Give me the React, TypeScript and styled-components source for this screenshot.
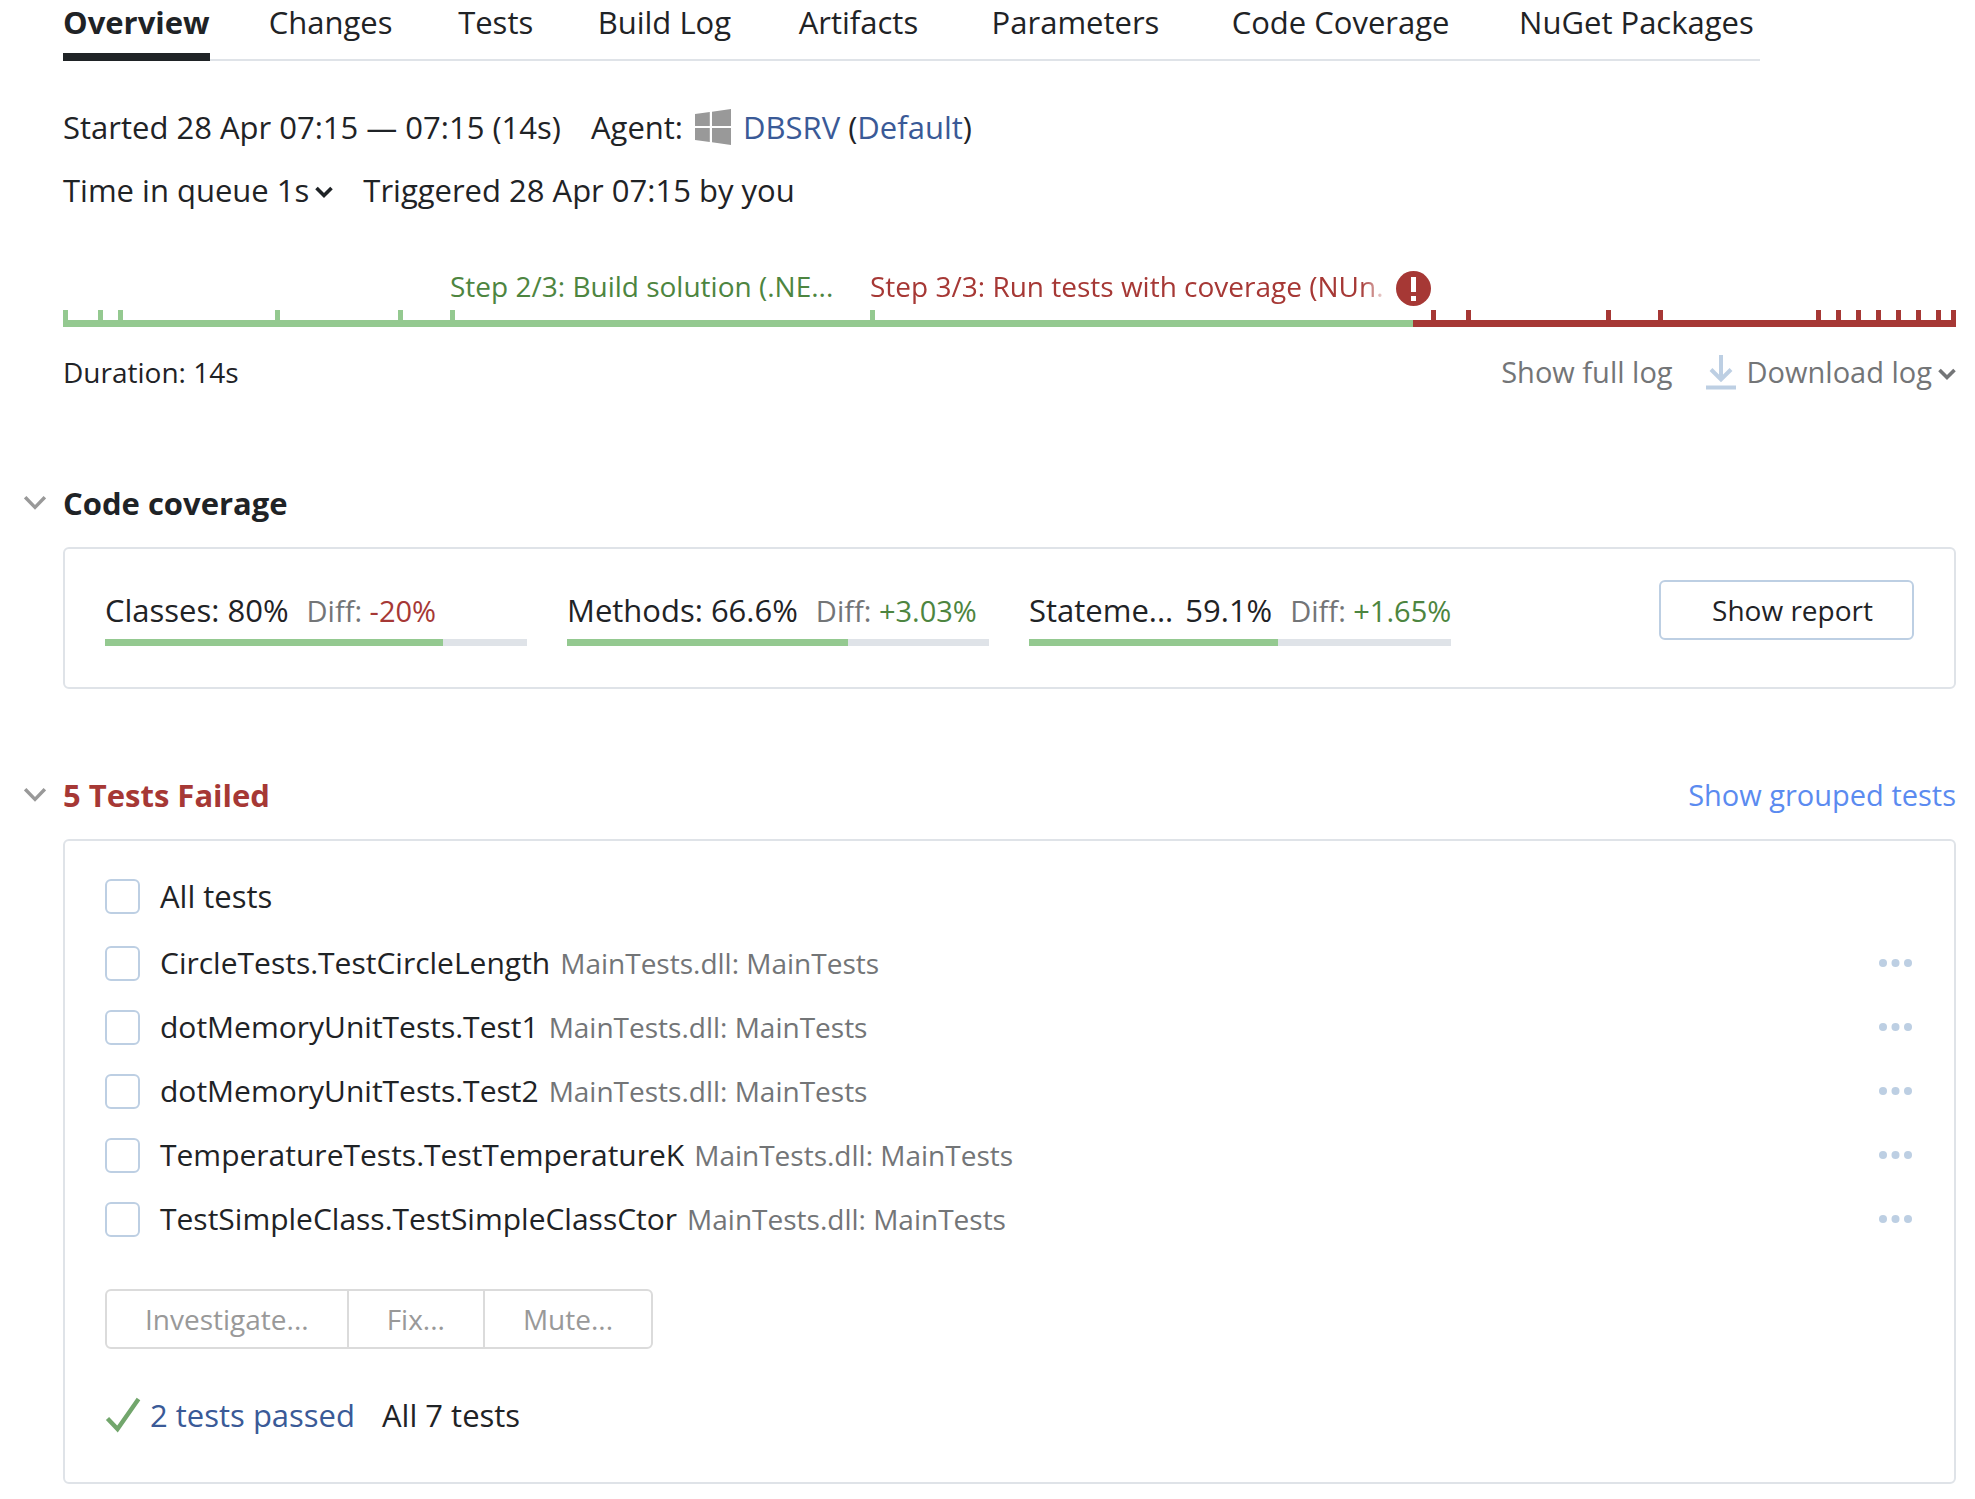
import React from "react";
import styled, { createGlobalStyle } from "styled-components";

const color = {
  text: "#1f2326",
  secondary: "#737577",
  disabled: "#999999",
  line: "#dfe3e8",
  control: "#bdcfe3",
  link: "#3a5a97",
  hover: "#5b8bf0",
  success: "#4d8540",
  failure: "#a63835",
  progress: "#94c990",
};

const GlobalStyle = createGlobalStyle`
  *, *::before, *::after { box-sizing: border-box; }
  body {
    margin: 0;
    background: #fff;
    color: ${color.text};
    font: 31px/44px "Open Sans", "Noto Sans", sans-serif;
  }
  button, input { font: inherit; color: inherit; }
  a { text-decoration: none; }
  ul { margin: 0; padding: 0; list-style: none; }
  svg { display: block; flex: none; }
`;

const Page = styled.main`
  padding: 0 19px 15px 63px;
`;

const Tabs = styled.nav`
  display: inline-flex;
  gap: 59px;
  padding-right: 6px;
  white-space: nowrap;
  box-shadow: inset 0 -2px ${color.line};
`;

const Tab = styled.a<{ $active?: boolean }>`
  height: 61px;
  color: ${color.text};
  font-weight: ${(p) => (p.$active ? 700 : 400)};
  border-bottom: 8px solid ${(p) => (p.$active ? color.text : "transparent")};

  /* Keeps the width of the bold label so tabs do not move when selected. */
  &:not(:last-child)::after {
    content: attr(data-label);
    display: block;
    height: 0;
    overflow: hidden;
    visibility: hidden;
    font-weight: 700;
  }
`;

const Details = styled.section`
  margin-top: 34px;
`;

const DetailRow = styled.div`
  display: flex;
  align-items: center;
  height: 63px;
  gap: 30px;
  white-space: nowrap;
`;

const Agent = styled.span`
  display: flex;
  align-items: center;
  gap: 12px;
`;

const Link = styled.a`
  color: ${color.link};
`;

const PlainButton = styled.button`
  display: flex;
  align-items: center;
  gap: 6px;
  padding: 0;
  border: 0;
  background: none;
  cursor: pointer;
`;

const Timeline = styled.section`
  margin-top: 45px;
`;

const Steps = styled.div`
  display: flex;
  align-items: flex-end;
  padding-bottom: 4px;
`;

const Step = styled.div`
  display: flex;
  align-items: flex-end;
  gap: 7px;
  min-width: 0;
`;

const StepLabel = styled.span<{ $failed?: boolean }>`
  flex: 1;
  overflow: hidden;
  white-space: nowrap;
  font-size: 28px;
  line-height: 40px;
  color: ${(p) => (p.$failed ? color.failure : color.success)};
  mask-image: ${(p) => (p.$failed ? "linear-gradient(to left, transparent, #000 28px)" : "none")};
`;

const Track = styled.div`
  display: flex;
`;

const Segment = styled.div<{ $failed?: boolean }>`
  --tone: ${(p) => (p.$failed ? color.failure : color.progress)};
  height: 17px;
  border-bottom: 7px solid var(--tone);

  &::before {
    content: "";
    display: block;
    width: 5px;
    height: 10px;
    background: var(--tone);
  }
`;

const Gap = styled(Segment)`
  &::before { display: none; }
`;

const TimelineFooter = styled.div`
  display: flex;
  align-items: center;
  justify-content: space-between;
  margin-top: 25px;
  font-size: 28px;
  line-height: 40px;
`;

const LogActions = styled.div`
  display: flex;
  align-items: center;
  gap: 33px;
  font-size: 29px;
  color: ${color.secondary};
`;

const LogLink = styled.a`
  color: inherit;
`;

const DownloadButton = styled(PlainButton)`
  line-height: 40px;
  svg:first-child { margin-right: 5px; }
`;

const Section = styled.section<{ $top: number }>`
  margin-top: ${(p) => p.$top}px;
`;

const SectionHeader = styled.header`
  display: flex;
  align-items: center;
  justify-content: space-between;
  margin: 0 0 22px -39px;
`;

const SectionTitle = styled.h2<{ $failed?: boolean }>`
  margin: 0;
  font-size: 31px;
  line-height: 44px;
  font-weight: 700;
  color: ${(p) => (p.$failed ? color.failure : color.text)};

  button { gap: 17px; }
`;

const GroupLink = styled.a`
  font-size: 29px;
  color: ${color.hover};
`;

const Card = styled.div`
  border: 2px solid ${color.line};
  border-radius: 6px;
`;

const CoverageCard = styled(Card)`
  display: flex;
  align-items: flex-start;
  justify-content: space-between;
  padding: 31px 40px 41px;
`;

const Metrics = styled.div`
  display: flex;
  gap: 40px;
  padding-top: 8px;
`;

const Metric = styled.div`
  width: 422px;
`;

const MetricText = styled.div`
  display: flex;
  align-items: baseline;
  gap: 18px;
  height: 44px;
  white-space: nowrap;
`;

const MetricName = styled.span<{ $spread?: boolean }>`
  display: flex;
  gap: ${(p) => (p.$spread ? 12 : 8)}px;
`;

const Diff = styled.span`
  font-size: 29px;
  line-height: 40px;
  color: ${color.secondary};
`;

const DiffValue = styled.span<{ $negative?: boolean }>`
  color: ${(p) => (p.$negative ? color.failure : color.success)};
`;

const Meter = styled.div`
  height: 7px;
  margin-top: 7px;
  background: ${color.line};
`;

const MeterFill = styled.div`
  height: 7px;
  background: ${color.progress};
`;

const ReportButton = styled.button`
  width: 255px;
  height: 60px;
  padding: 0 0 0 12px;
  border: 2px solid ${color.control};
  border-radius: 6px;
  background: #fff;
  font-size: 28px;
  cursor: pointer;
`;

const TestsCard = styled(Card)`
  padding: 23px 40px 45px;
`;

const TestRow = styled.div`
  display: flex;
  align-items: center;
  justify-content: space-between;
  height: 64px;
`;

const TestList = styled.ul`
  margin-top: 3px;
  font-size: 30px;
`;

const TestLabel = styled.label`
  display: flex;
  align-items: center;
  gap: 20px;
`;

const Checkbox = styled.input`
  appearance: none;
  flex: none;
  width: 35px;
  height: 35px;
  margin: 0;
  border: 2px solid ${color.control};
  border-radius: 6px;
  background: #fff;

  &:checked { background: ${color.hover}; }
`;

const Suite = styled.span`
  margin-left: 10px;
  font-size: 28px;
  line-height: 40px;
  color: ${color.secondary};
`;

const ActionGroup = styled.div`
  display: inline-flex;
  height: 60px;
  margin-top: 38px;
  border: 2px solid #dbdbdb;
  border-radius: 6px;
`;

const ActionButton = styled.button`
  padding: 0 38px;
  border: 0;
  background: none;
  font-size: 28px;
  color: ${color.disabled};

  & + & { border-left: 2px solid #dbdbdb; }
`;

const Results = styled.div`
  display: flex;
  align-items: center;
  gap: 9px;
  margin-top: 44px;
`;

const AllResults = styled.span`
  margin-left: 18px;
`;

const Chevron = () => (
  <svg width="18" height="18" viewBox="0 0 18 18" fill="none" stroke="currentColor" strokeWidth="3.600">
    <path d="M1.500 7 9 14.500 16.500 7" />
  </svg>
);

const SectionChevron = () => (
  <svg width="22" height="14" viewBox="0 0 22 14" fill="none" stroke="#999" strokeWidth="3.400">
    <path d="M1.200 1.200 11 11.400 20.800 1.200" />
  </svg>
);

const WindowsIcon = () => (
  <svg width="36" height="36" viewBox="0 0 36 36" fill="#999">
    <path d="M0 5.1 14.8 3v14H0zM17 2.7 36 0v17H17zM0 19h14.8v14L0 30.9zM17 19h19v17l-19-2.7z" />
  </svg>
);

const ErrorIcon = () => (
  <svg width="35" height="35" viewBox="0 0 35 35" role="img" aria-label="Failed">
    <circle cx="17.5" cy="17.5" r="17.5" fill={color.failure} />
    <path d="M15 6h5v15h-5zM15 25h5v5h-5z" fill="#fff" />
  </svg>
);

const DownloadIcon = () => (
  <svg width="30" height="35" viewBox="0 0 30 35" fill="none" stroke={color.control} strokeWidth="4">
    <path d="M15 0v24M5 14.500 15 24.500l10-10M0 32.500h30" />
  </svg>
);

const CheckIcon = () => (
  <svg width="36" height="36" viewBox="0 0 36 36" fill="none" stroke="#72a66c" strokeWidth="4.400">
    <path d="M2.500 21.500 12.500 32 33.500 2" />
  </svg>
);

const MoreIcon = () => (
  <svg width="35" height="8" viewBox="0 0 35 8" fill={color.control}>
    <circle cx="4" cy="4" r="4" />
    <circle cx="16.5" cy="4" r="4" />
    <circle cx="29" cy="4" r="4" />
  </svg>
);

const tabs = ["Overview", "Changes", "Tests", "Build Log", "Artifacts", "Parameters", "Code Coverage", "NuGet Packages"];

/* Relative length of each stage in the build timeline. */
const TOTAL = 1893;
const share = (n: number) => ({ width: `${(n / TOTAL) * 100}%` });
const passedStages = [35, 20, 157, 123, 52, 420, 543];
const failedStages = [35, 140, 52, 158, 20, 20, 20, 20, 20, 20, 15, 5];

const metrics = [
  { name: "Classes:", value: 80, diff: "-20%" },
  { name: "Methods:", value: 66.6, diff: "+3.03%" },
  { name: "Stateme...", value: 59.1, diff: "+1.65%" },
];

const tests = [
  "CircleTests.TestCircleLength",
  "dotMemoryUnitTests.Test1",
  "dotMemoryUnitTests.Test2",
  "TemperatureTests.TestTemperatureK",
  "TestSimpleClass.TestSimpleClassCtor",
];

export default function App() {
  return (
    <>
      <GlobalStyle />
      <Page>
        <Tabs>
          {tabs.map((t, i) => (
            <Tab key={t} href="#" data-label={t} $active={i === 0}>{t}</Tab>
          ))}
        </Tabs>

        <Details>
          <DetailRow>
            <span>Started 28 Apr 07:15 — 07:15 (14s)</span>
            <Agent>
              Agent: <WindowsIcon />
              <span><Link href="#">DBSRV</Link> (<Link href="#">Default</Link>)</span>
            </Agent>
          </DetailRow>
          <DetailRow>
            <PlainButton>Time in queue 1s <Chevron /></PlainButton>
            <span>Triggered 28 Apr 07:15 by you</span>
          </DetailRow>
        </Details>

        <Timeline>
          <Steps>
            <Step style={share(387)} />
            <Step style={share(420)}>
              <StepLabel>Step 2/3: Build solution (.NE...</StepLabel>
            </Step>
            <Step style={share(561)}>
              <StepLabel $failed>Step 3/3: Run tests with coverage (NUn.</StepLabel>
              <ErrorIcon />
            </Step>
          </Steps>
          <Track>
            {passedStages.map((n, i) => <Segment key={i} style={share(n)} />)}
            <Gap $failed style={share(18)} />
            {failedStages.map((n, i) => <Segment key={i} $failed style={share(n)} />)}
          </Track>
          <TimelineFooter>
            <span>Duration: 14s</span>
            <LogActions>
              <LogLink href="#">Show full log</LogLink>
              <DownloadButton><DownloadIcon />Download log<Chevron /></DownloadButton>
            </LogActions>
          </TimelineFooter>
        </Timeline>

        <Section $top={89}>
          <SectionHeader>
            <SectionTitle>
              <PlainButton aria-expanded><SectionChevron />Code coverage</PlainButton>
            </SectionTitle>
          </SectionHeader>
          <CoverageCard>
            <Metrics>
              {metrics.map((m) => (
                <Metric key={m.name}>
                  <MetricText>
                    <MetricName $spread={m.name.endsWith("...")}>
                      <span>{m.name}</span>
                      <span>{m.value}%</span>
                    </MetricName>
                    <Diff>Diff: <DiffValue $negative={m.diff.startsWith("-")}>{m.diff}</DiffValue></Diff>
                  </MetricText>
                  <Meter><MeterFill style={{ width: `${m.value}%` }} /></Meter>
                </Metric>
              ))}
            </Metrics>
            <ReportButton>Show report</ReportButton>
          </CoverageCard>
        </Section>

        <Section $top={84}>
          <SectionHeader>
            <SectionTitle $failed>
              <PlainButton aria-expanded><SectionChevron />5 Tests Failed</PlainButton>
            </SectionTitle>
            <GroupLink href="#">Show grouped tests</GroupLink>
          </SectionHeader>
          <TestsCard>
            <TestRow>
              <TestLabel><Checkbox type="checkbox" />All tests</TestLabel>
            </TestRow>
            <TestList>
              {tests.map((name) => (
                <TestRow as="li" key={name}>
                  <TestLabel>
                    <Checkbox type="checkbox" />
                    <span>{name}<Suite>MainTests.dll: MainTests</Suite></span>
                  </TestLabel>
                  <PlainButton aria-label="More actions"><MoreIcon /></PlainButton>
                </TestRow>
              ))}
            </TestList>
            <ActionGroup>
              <ActionButton disabled>Investigate...</ActionButton>
              <ActionButton disabled>Fix...</ActionButton>
              <ActionButton disabled>Mute...</ActionButton>
            </ActionGroup>
            <Results>
              <CheckIcon />
              <Link href="#">2 tests passed</Link>
              <AllResults>All 7 tests</AllResults>
            </Results>
          </TestsCard>
        </Section>
      </Page>
    </>
  );
}
